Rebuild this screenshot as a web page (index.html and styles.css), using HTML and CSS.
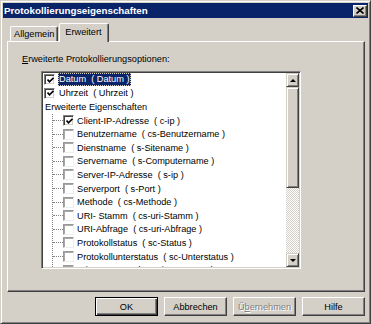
FILE: index.html
```html
<!DOCTYPE html>
<html lang="de">
<head>
  <meta charset="UTF-8" />
  <title>Protokollierungseigenschaften</title>
  <link rel="stylesheet" href="styles.css">
</head>
<body>
  <div class="window">
    <div class="titlebar">
      <span class="title">Protokollierungseigenschaften</span>
      <span class="close">
        <svg width="8" height="7" viewBox="0 0 8 7"><path d="M0.5 0.5 L7.5 6.5 M7.5 0.5 L0.5 6.5" stroke="#000" stroke-width="1.6"/></svg>
      </span>
    </div>

    <div class="dialog">
      <!-- tab strip -->
      <div class="tabs">
        <div class="tab">Allgemein</div>
        <div class="tab active">Erweitert</div>
      </div>

      <div class="panel">
        <div class="label"><u>E</u>rweiterte Protokollierungsoptionen:</div>

        <div class="listbox">
          <div class="tree">
            <div class="row">
              <span class="cb checked"><svg width="7" height="7" viewBox="0 0 7 7"><path d="M0.5 2.5 L2.5 4.8 L6.5 0.8" fill="none" stroke="#000" stroke-width="1.7"/></svg></span>
              <span class="text selected">Datum&nbsp; ( Datum )</span>
            </div>
            <div class="row">
              <span class="cb checked"><svg width="7" height="7" viewBox="0 0 7 7"><path d="M0.5 2.5 L2.5 4.8 L6.5 0.8" fill="none" stroke="#000" stroke-width="1.7"/></svg></span>
              <span class="text">Uhrzeit&nbsp; ( Uhrzeit )</span>
            </div>
            <div class="row">
              <span class="text group">Erweiterte Eigenschaften</span>
            </div>
            <div class="children">
              <div class="row">
                <span class="branch"></span>
                <span class="cb checked"><svg width="7" height="7" viewBox="0 0 7 7"><path d="M0.5 2.5 L2.5 4.8 L6.5 0.8" fill="none" stroke="#000" stroke-width="1.7"/></svg></span>
                <span class="text">Client-IP-Adresse&nbsp; ( c-ip )</span>
              </div>
              <div class="row"><span class="branch"></span><span class="cb"></span><span class="text">Benutzername&nbsp; ( cs-Benutzername )</span></div>
              <div class="row"><span class="branch"></span><span class="cb"></span><span class="text">Dienstname&nbsp; ( s-Sitename )</span></div>
              <div class="row"><span class="branch"></span><span class="cb"></span><span class="text">Servername&nbsp; ( s-Computername )</span></div>
              <div class="row"><span class="branch"></span><span class="cb"></span><span class="text">Server-IP-Adresse&nbsp; ( s-ip )</span></div>
              <div class="row"><span class="branch"></span><span class="cb"></span><span class="text">Serverport&nbsp; ( s-Port )</span></div>
              <div class="row"><span class="branch"></span><span class="cb"></span><span class="text">Methode&nbsp; ( cs-Methode )</span></div>
              <div class="row"><span class="branch"></span><span class="cb"></span><span class="text">URI- Stamm&nbsp; ( cs-uri-Stamm )</span></div>
              <div class="row"><span class="branch"></span><span class="cb"></span><span class="text">URI-Abfrage&nbsp; ( cs-uri-Abfrage )</span></div>
              <div class="row"><span class="branch"></span><span class="cb"></span><span class="text">Protokollstatus&nbsp; ( sc-Status )</span></div>
              <div class="row"><span class="branch"></span><span class="cb"></span><span class="text">Protokollunterstatus&nbsp; ( sc-Unterstatus )</span></div>
              <div class="row"><span class="branch"></span><span class="cb"></span><span class="text">Win32-Status&nbsp; ( sc-win32-Status )</span></div>
            </div>
          </div>

          <div class="scrollbar">
            <div class="sb-btn"><span class="arrow up"></span></div>
            <div class="sb-thumb"></div>
            <div class="sb-track"></div>
            <div class="sb-btn"><span class="arrow down"></span></div>
          </div>
        </div>
      </div>

      <div class="buttons">
        <button class="btn default">OK</button>
        <button class="btn">Abbrechen</button>
        <button class="btn disabled">Ü<u>b</u>ernehmen</button>
        <button class="btn">Hilfe</button>
      </div>
    </div>
  </div>
</body>
</html>
```

FILE: styles.css
```css
* { margin: 0; padding: 0; box-sizing: border-box; }

html, body {
  width: 100%;
  height: 100%;
  overflow: hidden;
  background: #d4d0c8;
  font-family: 'Liberation Sans', Arial, sans-serif;
  font-size: 9.2px;
  color: #000;
}

/* window frame */
.window {
  width: 371px;
  height: 324px;
  display: flex;
  flex-direction: column;
  padding: 2px;
  background: #d4d0c8;
  border: 1px solid;
  border-color: #d4d0c8 #404040 #404040 #d4d0c8;
  box-shadow: inset 1px 1px #fff, inset -1px -1px #808080;
}

.titlebar {
  height: 15px;
  flex: none;
  display: flex;
  align-items: center;
  justify-content: space-between;
  padding: 0 1px 0 1px;
  background: #0a246a;
}

.title {
  color: #fff;
  font-weight: bold;
  font-size: 9.8px;
}

.close {
  width: 14px;
  height: 12px;
  display: flex;
  align-items: center;
  justify-content: center;
  background: #d4d0c8;
  border: 1px solid;
  border-color: #fff #404040 #404040 #fff;
  box-shadow: inset -1px -1px #808080;
}

.dialog {
  flex: 1;
  display: flex;
  flex-direction: column;
  padding: 5px 3px 0 4px;
}

/* tabs */
.tabs {
  height: 18px;
  display: flex;
  align-items: flex-end;
  padding-left: 3px;
}

.tab {
  height: 15px;
  line-height: 14px;
  padding: 0 3px;
  border: 1px solid;
  border-bottom: none;
  border-color: #fff #404040 #404040 #fff;
  border-radius: 2px 2px 0 0;
  box-shadow: inset -1px 0 #808080;
  white-space: nowrap;
}

.tab.active {
  position: relative;
  z-index: 1;
  height: 19px;
  margin-bottom: -1px;
  margin-left: 1px;
  padding: 2px 6px 0 5px;
  line-height: 13px;
  background: #d4d0c8;
}

.panel {
  height: 251px;
  flex: none;
  border: 1px solid;
  border-color: #fff #404040 #404040 #fff;
  box-shadow: inset -1px -1px #808080;
  padding: 11px 0 0 14px;
}

.label {
  height: 13px;
  line-height: 13px;
  white-space: nowrap;
}

/* list with tree */
.listbox {
  width: 260px;
  height: 198px;
  margin: 5px 0 0 19px;
  display: flex;
  background: #fff;
  border: 1px solid;
  border-color: #808080 #fff #fff #808080;
  box-shadow: inset 1px 1px #404040, inset -1px -1px #d4d0c8;
  padding: 1px;
}

.tree {
  flex: 1;
  overflow: hidden;
  padding-left: 1px;
}

.row {
  height: 13.6px;
  display: flex;
  align-items: center;
  white-space: nowrap;
}

.cb {
  width: 11px;
  height: 11px;
  flex: none;
  display: flex;
  align-items: center;
  justify-content: center;
  background: #fff;
  border: 1px solid;
  border-color: #999 #eee #eee #999;
  box-shadow: inset 1px 1px #a8a8a8;
  margin-right: 3px;
}

.cb.checked {
  border-color: #808080 #fff #fff #808080;
  box-shadow: inset 1px 1px #404040, inset -1px -1px #d4d0c8;
}

.cb svg { margin: 1px 0 0 1px; }

.text {
  padding: 0 1px;
  line-height: 12px;
}

.text.selected {
  background: #0a246a;
  color: #fff;
  outline: 1px dotted #d4d0c8;
  outline-offset: -1px;
  line-height: 13px;
  padding: 0 2px 0 1px;
}

.children {
  margin-left: 8px;
  border-left: 1px dotted #808080;
}

.branch {
  width: 10px;
  flex: none;
  border-top: 1px dotted #808080;
}

.children .cb { margin-right: 2px; }

/* scrollbar */
.scrollbar {
  width: 13px;
  flex: none;
  display: flex;
  flex-direction: column;
}

.sb-btn, .sb-thumb {
  background: #d4d0c8;
  border: 1px solid;
  border-color: #d4d0c8 #404040 #404040 #d4d0c8;
  box-shadow: inset 1px 1px #fff, inset -1px -1px #808080;
}

.sb-btn {
  height: 14px;
  display: flex;
  align-items: center;
  justify-content: center;
}

.sb-thumb { height: 101px; }

.sb-track {
  flex: 1;
  background: repeating-conic-gradient(#fff 0 25%, #d4d0c8 0 50%) 0 0 / 2px 2px;
}

.arrow {
  width: 0;
  height: 0;
  border-left: 3px solid transparent;
  border-right: 3px solid transparent;
}

.arrow.up { border-bottom: 3px solid #000; }
.arrow.down { border-top: 3px solid #000; }

/* dialog buttons */
.buttons {
  display: flex;
  justify-content: flex-end;
  gap: 6px;
  margin-top: 5px;
}

.btn {
  width: 63px;
  height: 19px;
  font-family: inherit;
  font-size: 9.2px;
  color: #000;
  background: #d4d0c8;
  border: 1px solid;
  border-color: #fff #404040 #404040 #fff;
  box-shadow: inset -1px -1px #808080;
}

.btn.default {
  border: 1px solid #000;
  box-shadow: inset 1px 1px #fff, inset -1px -1px #404040, inset -2px -2px #808080;
}

.btn.disabled {
  color: #808080;
  text-shadow: 1px 1px #fff;
}
```
